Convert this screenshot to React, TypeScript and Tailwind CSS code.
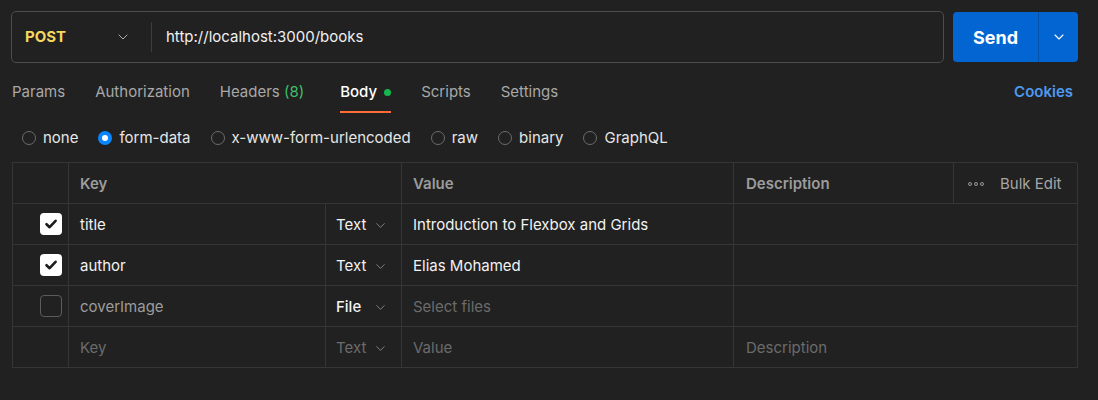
import { ChevronDown } from "lucide-react";

const font = { fontFamily: "Inter, 'Noto Sans', sans-serif" };

function Radio({ label, checked = false }: { label: string; checked?: boolean }) {
  return (
    <div className="flex items-center gap-[7px]">
      {checked ? (
        <span className="flex h-[14px] w-[14px] items-center justify-center rounded-full bg-[#0a84ff]">
          <span className="h-[6px] w-[6px] rounded-full bg-white" />
        </span>
      ) : (
        <span className="h-[14px] w-[14px] rounded-full border border-[#6b6b6b]" />
      )}
      <span className="text-[15px] text-[#e6e6e6]">{label}</span>
    </div>
  );
}

function Check({ on }: { on: boolean }) {
  if (!on)
    return <span className="h-[22px] w-[22px] rounded-[4px] border border-[#5c5c5c]" />;
  return (
    <span className="flex h-[22px] w-[22px] items-center justify-center rounded-[4px] bg-white">
      <svg width="14" height="14" viewBox="0 0 14 14" fill="none">
        <path d="M2.5 7.2 L5.6 10.2 L11.6 3.8" stroke="#1c1c1c" strokeWidth="2.6" strokeLinecap="round" strokeLinejoin="round" />
      </svg>
    </span>
  );
}

const base = "flex h-[41px] items-center border-b border-r border-[#353535]";
const cell = `${base} pt-[3px]`;

type Row = { on: boolean | null; key: string; type: string; value: string; keyMuted?: boolean; valueMuted?: boolean; typeMuted?: boolean; desc?: boolean };

const rows: Row[] = [
  { on: true, key: "title", type: "Text", value: "Introduction to Flexbox and Grids" },
  { on: true, key: "author", type: "Text", value: "Elias Mohamed" },
  { on: false, key: "coverImage", type: "File", value: "Select files", keyMuted: true, valueMuted: true },
  { on: null, key: "Key", type: "Text", value: "Value", keyMuted: true, valueMuted: true, typeMuted: true, desc: true },
];

export default function App() {
  return (
    <div className="h-[400px] w-full bg-[#212121]" style={font}>
      <div className="flex gap-[9px] pl-[11px] pr-[20px] pt-[11px]">
        <div className="flex h-[52px] flex-1 items-center rounded-[5px] border border-[#4d4d4d]">
          <div className="flex w-[139px] items-center justify-between pl-[13px] pr-[20px]">
            <span className="text-[15px] font-bold text-[#f5d75e]">POST</span>
            <ChevronDown size={16} strokeWidth={1.5} className="text-[#b0b0b0]" />
          </div>
          <div className="h-[30px] w-px bg-[#3d3d3d]" />
          <span className="pl-[14px] text-[15px] text-[#f0f0f0]">http://localhost:3000/books</span>
        </div>
        <div className="mt-px flex h-[50px] w-[125px] overflow-hidden rounded-[4px] bg-[#0265d2]">
          <div className="flex w-[85px] items-center justify-center text-[18px] font-bold text-white">Send</div>
          <div className="w-px bg-[#0353ad]" />
          <div className="flex flex-1 items-center justify-center">
            <ChevronDown size={16} strokeWidth={1.6} className="text-white" />
          </div>
        </div>
      </div>

      <div className="mt-[13px] flex h-[36px] items-start justify-between pl-[12px] pr-[25px]">
        <div className="flex gap-[30px] text-[15px] text-[#a8a8a8]">
          <span className="pt-[5px]">Params</span>
          <span className="pt-[5px]">Authorization</span>
          <span className="pt-[5px]">
            Headers <span className="text-[#3fbf6a]">(8)</span>
          </span>
          <span className="ml-[6px] flex flex-col">
            <span className="flex items-center gap-[7px] pt-[5px] font-medium text-white">
              Body <span className="h-[7px] w-[7px] rounded-full bg-[#12b84e]" />
            </span>
            <span className="mt-[7px] h-[2px] w-[51px] bg-[#ff6c37]" />
          </span>
          <span className="pt-[5px]">Scripts</span>
          <span className="pt-[5px]">Settings</span>
        </div>
        <span className="pt-[5px] text-[15px] font-semibold text-[#4e9af1]">Cookies</span>
      </div>

      <div className="mt-[15px] flex items-center gap-[20px] pl-[22px]">
        <Radio label="none" />
        <Radio label="form-data" checked />
        <Radio label="x-www-form-urlencoded" />
        <Radio label="raw" />
        <Radio label="binary" />
        <Radio label="GraphQL" />
      </div>

      <div className="ml-[12px] mt-[12px] grid w-[1065px] grid-cols-[56px_257px_76px_332px_220px_124px] border-l border-t border-[#353535] text-[15px]">
        <div className={base} />
        <div className={`${cell} col-span-2 pl-[11px] font-semibold text-[#9c9c9c]`}>Key</div>
        <div className={`${cell} pl-[11px] font-semibold text-[#9c9c9c]`}>Value</div>
        <div className={`${cell} pl-[12px] font-semibold text-[#9c9c9c]`}>Description</div>
        <div className={`${cell} gap-[16px] pl-[14px] text-[#a6a6a6]`}>
          <span className="flex gap-[2px]">
            <span className="h-[4px] w-[4px] rounded-full border border-[#9a9a9a]" />
            <span className="h-[4px] w-[4px] rounded-full border border-[#9a9a9a]" />
            <span className="h-[4px] w-[4px] rounded-full border border-[#9a9a9a]" />
          </span>
          Bulk Edit
        </div>
        {rows.map((r) => (
          <>
            <div key={r.key + "c"} className={`${base} justify-end pr-[6px]`}>
              {r.on !== null && <Check on={r.on} />}
            </div>
            <div className={`${cell} pl-[11px] ${r.keyMuted ? (r.desc ? "text-[#6b6b6b]" : "text-[#9c9c9c]") : "text-[#f2f2f2]"}`}>
              {r.key}
            </div>
            <div className={`${cell} justify-between pl-[10px] pr-[13px] ${r.typeMuted ? "text-[#6b6b6b]" : "text-[#f2f2f2]"} ${r.type === "File" ? "font-medium" : ""}`}>
              {r.type}
              <ChevronDown size={15} strokeWidth={1.4} className="text-[#8c8c8c]" />
            </div>
            <div className={`${cell} pl-[11px] ${r.valueMuted ? "text-[#6b6b6b]" : "text-[#f2f2f2]"}`}>{r.value}</div>
            <div className={`${cell} col-span-2 pl-[12px] text-[#6b6b6b]`}>{r.desc ? "Description" : ""}</div>
          </>
        ))}
      </div>
    </div>
  );
}
